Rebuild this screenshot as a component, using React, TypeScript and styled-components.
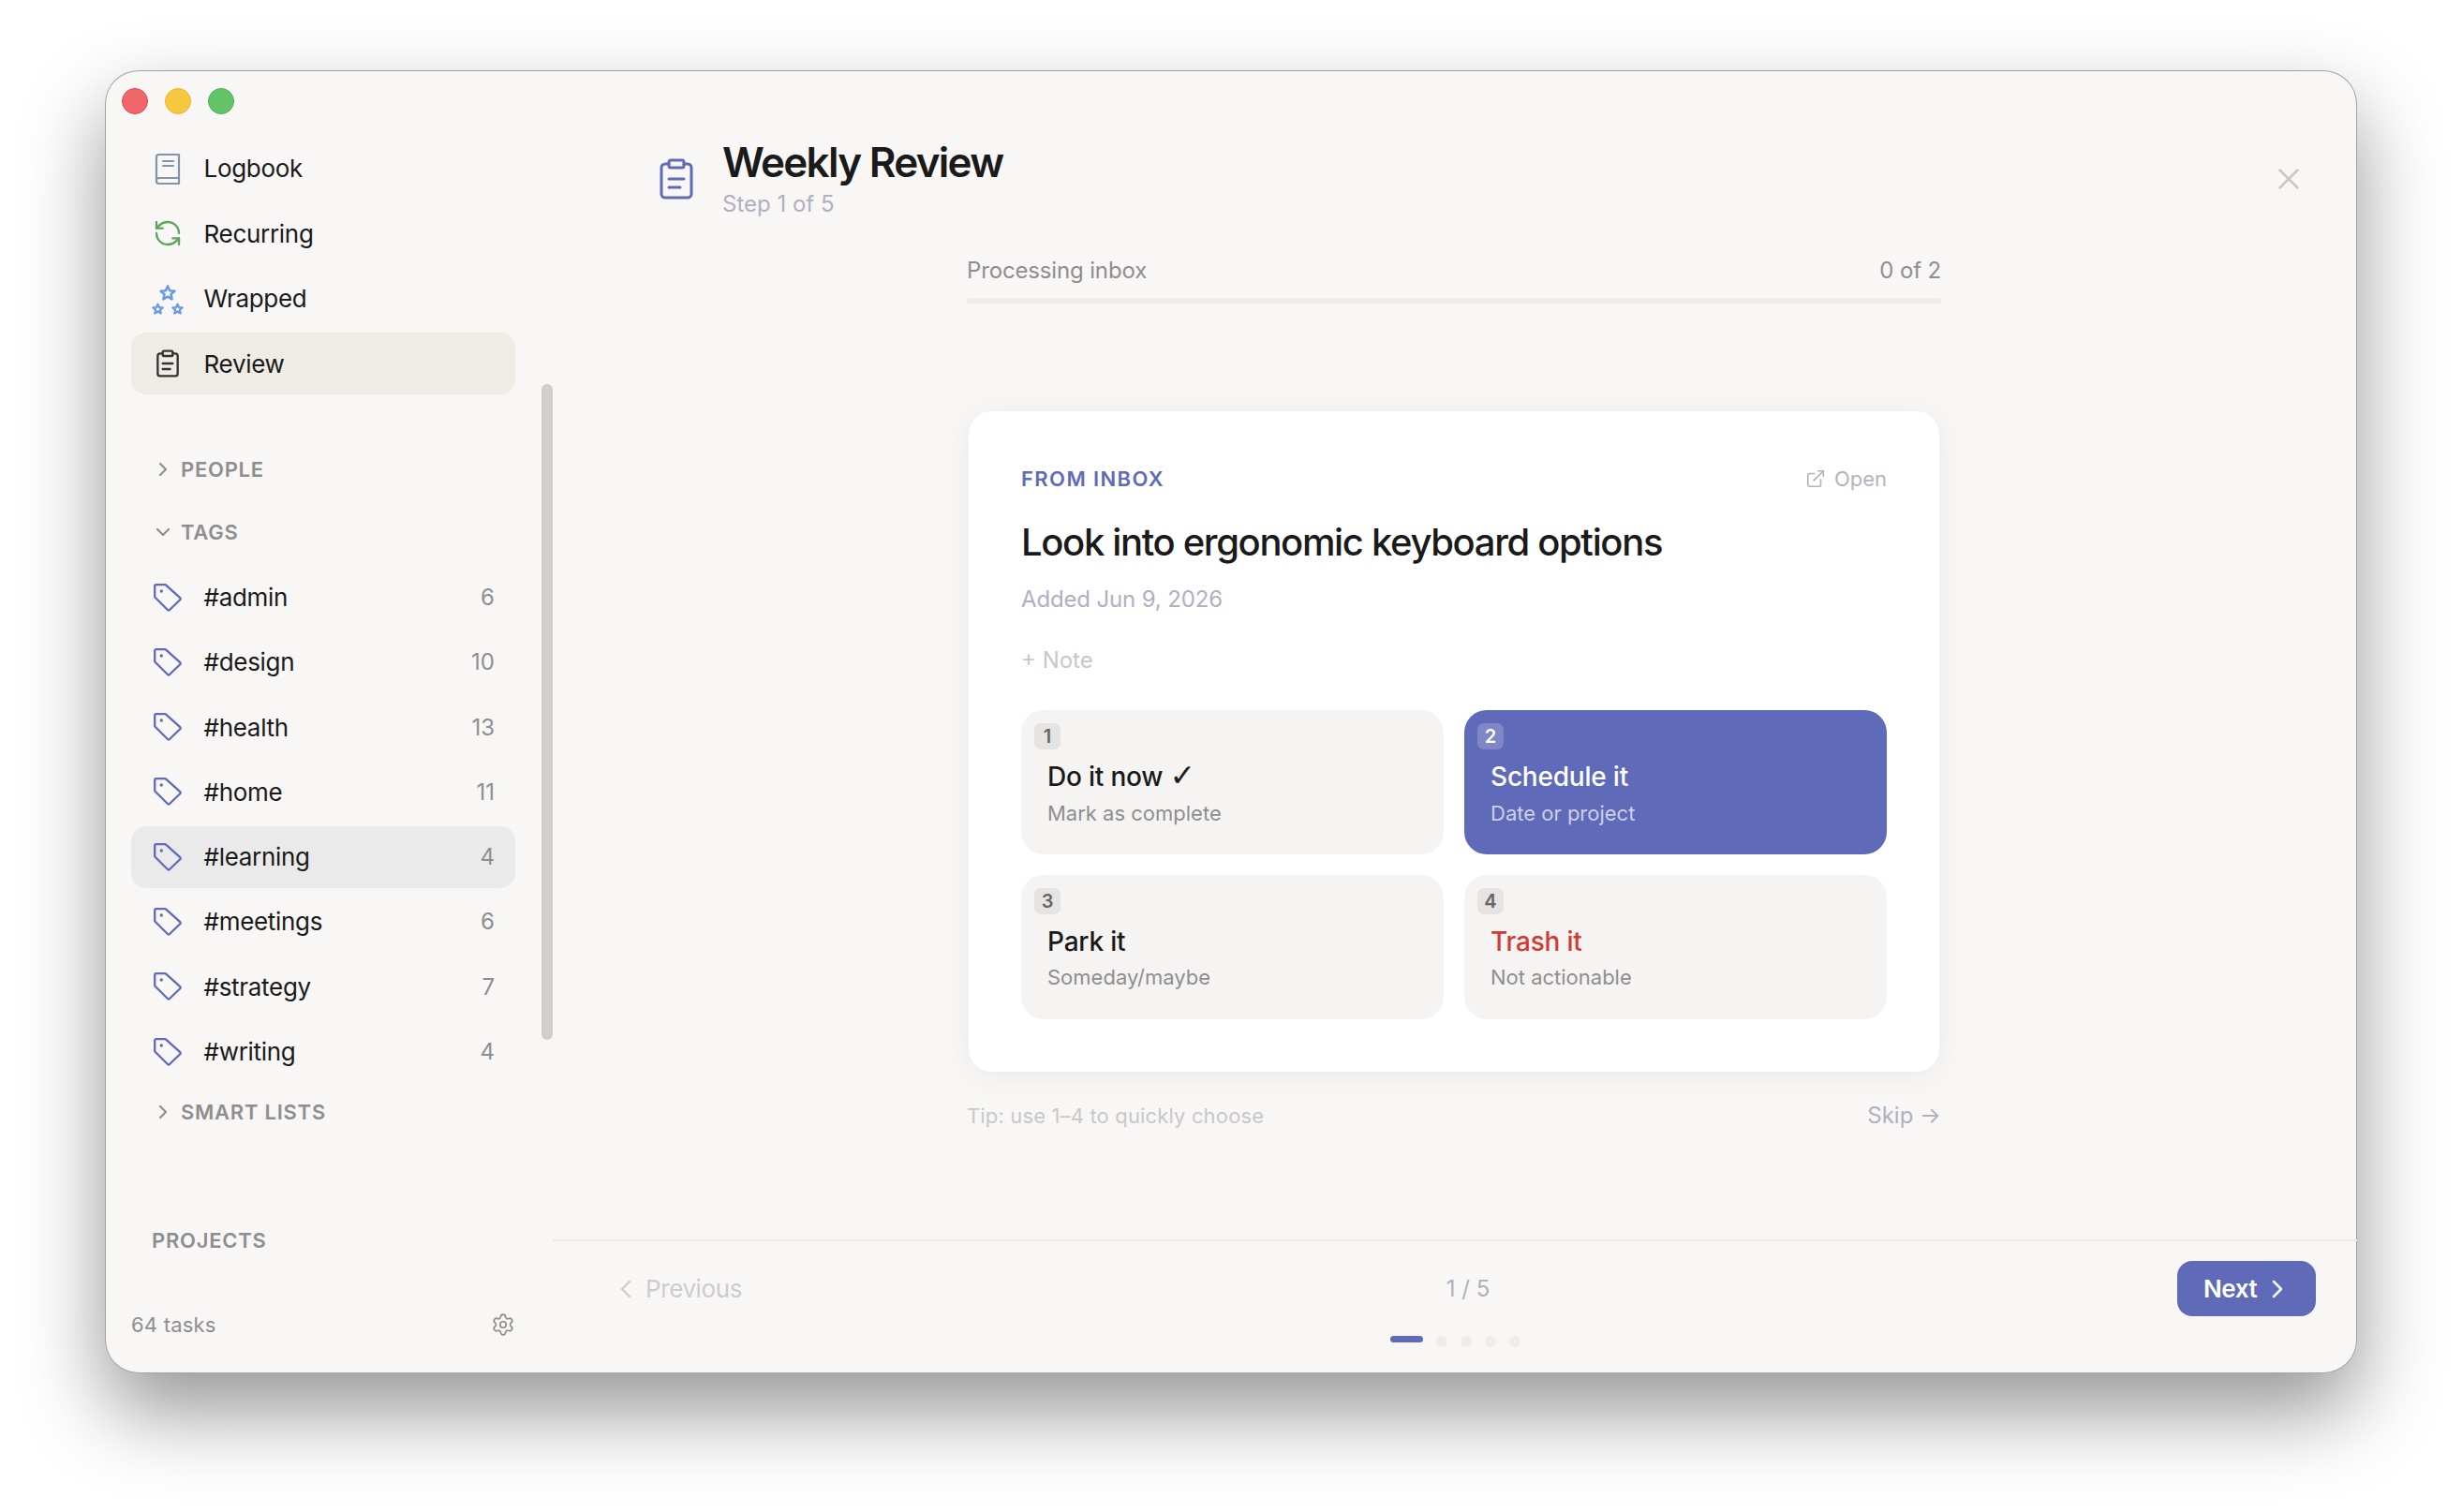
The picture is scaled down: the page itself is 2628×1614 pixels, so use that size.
import { FC } from 'react'
import styled, { createGlobalStyle } from 'styled-components'
import { ChevronDown, ChevronLeft, ChevronRight, ExternalLink, RefreshCcw, Settings, X } from 'lucide-react'

const GlobalStyle = createGlobalStyle`
html, body {
  margin: 0;
  padding: 0;
  background: #ffffff;
}
body {
  font-family: Inter, "Liberation Sans", sans-serif;
  color: #1a1a1a;
}
* {
  box-sizing: border-box;
}
`

const Page = styled.div`
width: 2628px;
height: 1614px;
padding: 75px 112px;
overflow: hidden;
`

const Window = styled.div`
position: relative;
display: flex;
width: 2404px;
height: 1391px;
border-radius: 36px;
background: #f8f7f5;
box-shadow: inset 0 0 0 1px rgba(0, 0, 0, 0.34), 0 40px 88px rgba(0, 0, 0, 0.42);
`

const Sidebar = styled.aside`
position: relative;
display: flex;
flex-direction: column;
flex: 0 0 478px;
padding: 19px 28px 32px;
`

const TrafficLights = styled.div`
display: flex;
gap: 18px;
margin: 0 0 24.5px -10px;
`

const Light = styled.span<{ $color: string; $edge: string }>`
width: 28px;
height: 28px;
border-radius: 50%;
background: ${p => p.$color};
border: 1px solid ${p => p.$edge};
`

const Scrollbar = styled.div`
position: absolute;
top: 335px;
right: 0;
width: 12px;
height: 700px;
border-radius: 6px;
background: #cfcecc;
`

const Row = styled.div<{ $bg?: string }>`
display: flex;
align-items: center;
width: 410px;
height: 66px;
margin-bottom: 3.5px;
padding: 0 22px 0 23px;
border-radius: 16px;
background: ${p => p.$bg || 'transparent'};
font-size: 26px;
letter-spacing: -0.3px;
`

const TagRow = styled(Row)`
margin-bottom: 3.3px;
`

const RowIcon = styled.span<{ $color: string }>`
display: flex;
align-items: center;
justify-content: center;
flex: 0 0 32px;
height: 36px;
margin-right: 22.5px;
color: ${p => p.$color};
`

const RowCount = styled.span`
margin-left: auto;
font-size: 24px;
letter-spacing: 0;
color: #8e8e8e;
`

const SectionHeader = styled.div<{ $top: number }>`
display: flex;
align-items: center;
gap: 7px;
height: 40px;
margin-top: ${p => p.$top}px;
padding-left: 22px;
font-size: 22px;
font-weight: 600;
letter-spacing: 0.75px;
color: #8e8e8e;
`

const TagSpacer = styled.div`
height: 17px;
`

const SidebarFooter = styled.div`
display: flex;
align-items: center;
justify-content: space-between;
width: 410px;
height: 40px;
margin-top: auto;
font-size: 22px;
letter-spacing: 0.2px;
color: #8e8e8e;
`

const Main = styled.main`
display: flex;
flex-direction: column;
flex: 1;
min-width: 0;
`

const Header = styled.header`
display: flex;
align-items: center;
padding: 72px 54px 0 108px;
`

const HeaderIcon = styled.span`
display: flex;
margin-right: 25px;
color: #5f6ab8;
`

const Title = styled.h1`
margin: 0;
font-size: 44px;
line-height: 52px;
font-weight: 600;
letter-spacing: -1.7px;
color: #1a1a1a;
`

const Subtitle = styled.div`
margin-top: 3px;
font-size: 24px;
line-height: 32px;
color: #b0b0bf;
`

const CloseButton = styled.span`
display: flex;
margin-left: auto;
color: #c8c8c8;
`

const Content = styled.div`
flex: 1;
width: 1040px;
margin-left: 442px;
`

const ProgressLabels = styled.div`
display: flex;
justify-content: space-between;
margin-top: 39px;
font-size: 24px;
line-height: 32px;
letter-spacing: -0.15px;
color: #8e8e8e;
`

const ProgressTrack = styled.div`
height: 6px;
margin-top: 13px;
border-radius: 3px;
background: #efede6;
`

const Card = styled.section`
margin: 115px 2px 0;
padding: 57px 56px 56px;
border-radius: 24px;
background: #ffffff;
box-shadow: 0 4px 32px rgba(0, 0, 0, 0.06);
`

const CardTop = styled.div`
display: flex;
align-items: center;
justify-content: space-between;
height: 30px;
`

const Source = styled.span`
font-size: 22px;
font-weight: 600;
letter-spacing: 1.4px;
color: #5f6ab8;
`

const OpenLink = styled.span`
display: flex;
align-items: center;
gap: 9px;
font-size: 22px;
color: #b3b3c0;
`

const TaskTitle = styled.h2`
margin: 27px 0 0;
font-size: 40px;
line-height: 52px;
font-weight: 500;
letter-spacing: -1.35px;
color: #1a1a1a;
`

const Added = styled.div`
margin-top: 19px;
font-size: 24px;
line-height: 32px;
letter-spacing: -0.15px;
color: #b0b0bf;
`

const NoteLink = styled.div`
margin-top: 33px;
font-size: 24px;
line-height: 32px;
color: #c8c8c8;
`

const Options = styled.div`
display: grid;
grid-template-columns: 1fr 1fr;
gap: 21.5px 22px;
margin-top: 37px;
`

const Option = styled.div<{ $primary?: boolean }>`
position: relative;
height: 154px;
padding: 52px 28px 0;
border-radius: 24px;
background: ${p => (p.$primary ? '#5f6ab8' : '#f5f4f2')};
`

const KeyBadge = styled.span<{ $primary?: boolean }>`
position: absolute;
top: 14px;
left: 14px;
width: 28px;
height: 28px;
border-radius: 7px;
background: ${p => (p.$primary ? 'rgba(255, 255, 255, 0.2)' : '#e5e4e2')};
color: ${p => (p.$primary ? '#ffffff' : '#666666')};
font-size: 20px;
font-weight: 600;
line-height: 28px;
text-align: center;
`

const OptionLabel = styled.div<{ $color: string }>`
font-size: 28px;
line-height: 38px;
font-weight: 500;
letter-spacing: -0.2px;
color: ${p => p.$color};
`

const CheckGlyph = styled.span`
font-family: "DejaVu Sans", sans-serif;
font-weight: 400;
font-size: 33px;
line-height: 0;
`

const OptionSub = styled.div<{ $color: string }>`
margin-top: 4.5px;
font-size: 22px;
line-height: 30px;
color: ${p => p.$color};
`

const TipRow = styled.div`
display: flex;
align-items: center;
justify-content: space-between;
margin-top: 31px;
height: 32px;
`

const Tip = styled.span`
font-size: 22px;
letter-spacing: 0.15px;
color: #c8c8c8;
`

const Skip = styled.span`
font-size: 24px;
color: #b0b0bf;
`

const Footer = styled.footer`
flex: 0 0 143px;
padding: 21px 44px 0;
border-top: 2px solid #ebebe9;
`

const FooterRow = styled.div`
display: flex;
align-items: center;
justify-content: space-between;
height: 59px;
`

const PrevButton = styled.span`
display: flex;
align-items: center;
gap: 5px;
padding: 0 18px 0 18px;
font-size: 26px;
letter-spacing: -0.4px;
color: #cccccc;
`

const PageNumber = styled.span`
font-size: 24px;
color: #b0b0bf;
`

const NextButton = styled.span`
display: flex;
align-items: center;
gap: 6px;
width: 148px;
height: 59px;
padding-left: 28px;
border-radius: 16px;
background: #5f6ab8;
color: #ffffff;
font-size: 26px;
font-weight: 600;
letter-spacing: -0.4px;
`

const Dots = styled.div`
display: flex;
justify-content: center;
gap: 14px;
margin-top: 21px;
`

const Dot = styled.span<{ $current?: boolean }>`
width: ${p => (p.$current ? 35 : 12)}px;
height: ${p => (p.$current ? 7 : 12)}px;
border-radius: 6px;
background: ${p => (p.$current ? '#5f6ab8' : '#efede6')};
`

const BookIcon: FC = () => (
  <svg width="32" height="36" viewBox="0 0 32 36" fill="none" stroke="currentColor" strokeWidth="2.200" strokeLinecap="round" strokeLinejoin="round">
    <path d="M28 3H6.500A2.500 2.500 0 0 0 4 5.500V31.500A2.500 2.500 0 0 0 6.500 34H28z" />
    <path d="M4 30.500A2.500 2.500 0 0 1 6.500 28H28" />
    <path d="M11 10h11M11 15h11" />
  </svg>
)

const StarsIcon: FC = () => {
  const star = 'M0-9.500 2.700-3.400 9.300-2.800 4.300 1.500 5.800 8 0 4.600-5.800 8-4.300 1.500-9.300-2.800-2.700-3.400z'
  return (
    <svg width="32" height="36" viewBox="0 0 32 36" fill="none" stroke="currentColor" strokeLinejoin="round" overflow="visible">
      <path d={star} transform="translate(16 12) scale(.8)" strokeWidth="3.100" />
      <path d={star} transform="translate(5.500 29) scale(.55)" strokeWidth="4.200" />
      <path d={star} transform="translate(26.500 29) scale(.55)" strokeWidth="4.200" />
    </svg>
  )
}

const TagIcon: FC = () => (
  <svg width="30" height="30" viewBox="0 0 30 30" fill="none" stroke="currentColor" strokeWidth="2.300">
    <path d="M2.500 1.200H12.200a1.500 1.500 0 0 1 1 .44L28.200 15.200a1.500 1.500 0 0 1 0 2.100L17 28a1.500 1.500 0 0 1-2.100 0L1.600 14.700a1.500 1.500 0 0 1-.4-1V2.500a1.300 1.300 0 0 1 1.300-1.300z" />
    <circle cx="8.300" cy="8" r="1.700" fill="currentColor" stroke="none" />
  </svg>
)

const ClipboardIcon: FC<{ size: number; stroke: number }> = ({ size, stroke }) => (
  <svg width={size} height={size} viewBox="0 0 24 24" fill="none" stroke="currentColor" strokeWidth={stroke} strokeLinecap="round" strokeLinejoin="round">
    <rect x="8" y="2" width="8" height="4" rx="1" />
    <path d="M16 4h2a2 2 0 0 1 2 2v14a2 2 0 0 1-2 2H6a2 2 0 0 1-2-2V6a2 2 0 0 1 2-2h2" />
    <path d="M8 12h8M8 16.500h6" />
  </svg>
)

const tags: [string, number][] = [
  ['#admin', 6],
  ['#design', 10],
  ['#health', 13],
  ['#home', 11],
  ['#learning', 4],
  ['#meetings', 6],
  ['#strategy', 7],
  ['#writing', 4],
]

const options = [
  { key: 1, label: 'Do it now', check: true, sub: 'Mark as complete', color: '#1a1a1a' },
  { key: 2, label: 'Schedule it', sub: 'Date or project', color: '#ffffff', primary: true },
  { key: 3, label: 'Park it', sub: 'Someday/maybe', color: '#1a1a1a' },
  { key: 4, label: 'Trash it', sub: 'Not actionable', color: '#d13b35' },
]

const App: FC = () => (
  <Page>
    <GlobalStyle />
    <Window>
      <Sidebar>
        <TrafficLights>
          <Light $color="#f1666a" $edge="#e0484c" />
          <Light $color="#f5c83f" $edge="#e6b52c" />
          <Light $color="#62c466" $edge="#4cb152" />
        </TrafficLights>
        <Row>
          <RowIcon $color="#8295a6"><BookIcon /></RowIcon>
          Logbook
        </Row>
        <Row>
          <RowIcon $color="#5da45e"><RefreshCcw size={32} strokeWidth={1.75} /></RowIcon>
          Recurring
        </Row>
        <Row>
          <RowIcon $color="#6a9ae0"><StarsIcon /></RowIcon>
          Wrapped
        </Row>
        <Row $bg="#efece6">
          <RowIcon $color="#333333"><ClipboardIcon size={32} stroke={1.75} /></RowIcon>
          Review
        </Row>
        <SectionHeader $top={56}>
          <ChevronRight size={24} strokeWidth={2.200} />
          PEOPLE
        </SectionHeader>
        <SectionHeader $top={27}>
          <ChevronDown size={24} strokeWidth={2.200} />
          TAGS
        </SectionHeader>
        <TagSpacer />
        {tags.map(([name, count]) => (
          <TagRow key={name} $bg={name === '#learning' ? '#eaeaea' : undefined}>
            <RowIcon $color="#5f6ab8"><TagIcon /></RowIcon>
            {name}
            <RowCount>{count}</RowCount>
          </TagRow>
        ))}
        <SectionHeader $top={8}>
          <ChevronRight size={24} strokeWidth={2.200} />
          SMART LISTS
        </SectionHeader>
        <SectionHeader $top={97}>PROJECTS</SectionHeader>
        <SidebarFooter>
          64 tasks
          <Settings size={26} strokeWidth={1.600} color="#8e8e8e" />
        </SidebarFooter>
        <Scrollbar />
      </Sidebar>
      <Main>
        <Header>
          <HeaderIcon><ClipboardIcon size={48} stroke={1.500} /></HeaderIcon>
          <div>
            <Title>Weekly Review</Title>
            <Subtitle>Step 1 of 5</Subtitle>
          </div>
          <CloseButton><X size={38} strokeWidth={1.600} /></CloseButton>
        </Header>
        <Content>
          <ProgressLabels>
            <span>Processing inbox</span>
            <span>0 of 2</span>
          </ProgressLabels>
          <ProgressTrack />
          <Card>
            <CardTop>
              <Source>FROM INBOX</Source>
              <OpenLink><ExternalLink size={22} strokeWidth={1.800} />Open</OpenLink>
            </CardTop>
            <TaskTitle>Look into ergonomic keyboard options</TaskTitle>
            <Added>Added Jun 9, 2026</Added>
            <NoteLink>+ Note</NoteLink>
            <Options>
              {options.map(o => (
                <Option key={o.key} $primary={o.primary}>
                  <KeyBadge $primary={o.primary}>{o.key}</KeyBadge>
                  <OptionLabel $color={o.color}>
                    {o.label}
                    {o.check && <> <CheckGlyph>✓</CheckGlyph></>}
                  </OptionLabel>
                  <OptionSub $color={o.primary ? 'rgba(255, 255, 255, 0.7)' : '#8e8e8e'}>{o.sub}</OptionSub>
                </Option>
              ))}
            </Options>
          </Card>
          <TipRow>
            <Tip>Tip: use 1–4 to quickly choose</Tip>
            <Skip>Skip →</Skip>
          </TipRow>
        </Content>
        <Footer>
          <FooterRow>
            <PrevButton><ChevronLeft size={32} strokeWidth={1.600} />Previous</PrevButton>
            <PageNumber>1 / 5</PageNumber>
            <NextButton>Next<ChevronRight size={32} strokeWidth={1.900} /></NextButton>
          </FooterRow>
          <Dots>
            <Dot $current />
            <Dot />
            <Dot />
            <Dot />
            <Dot />
          </Dots>
        </Footer>
      </Main>
    </Window>
  </Page>
)

export default App
